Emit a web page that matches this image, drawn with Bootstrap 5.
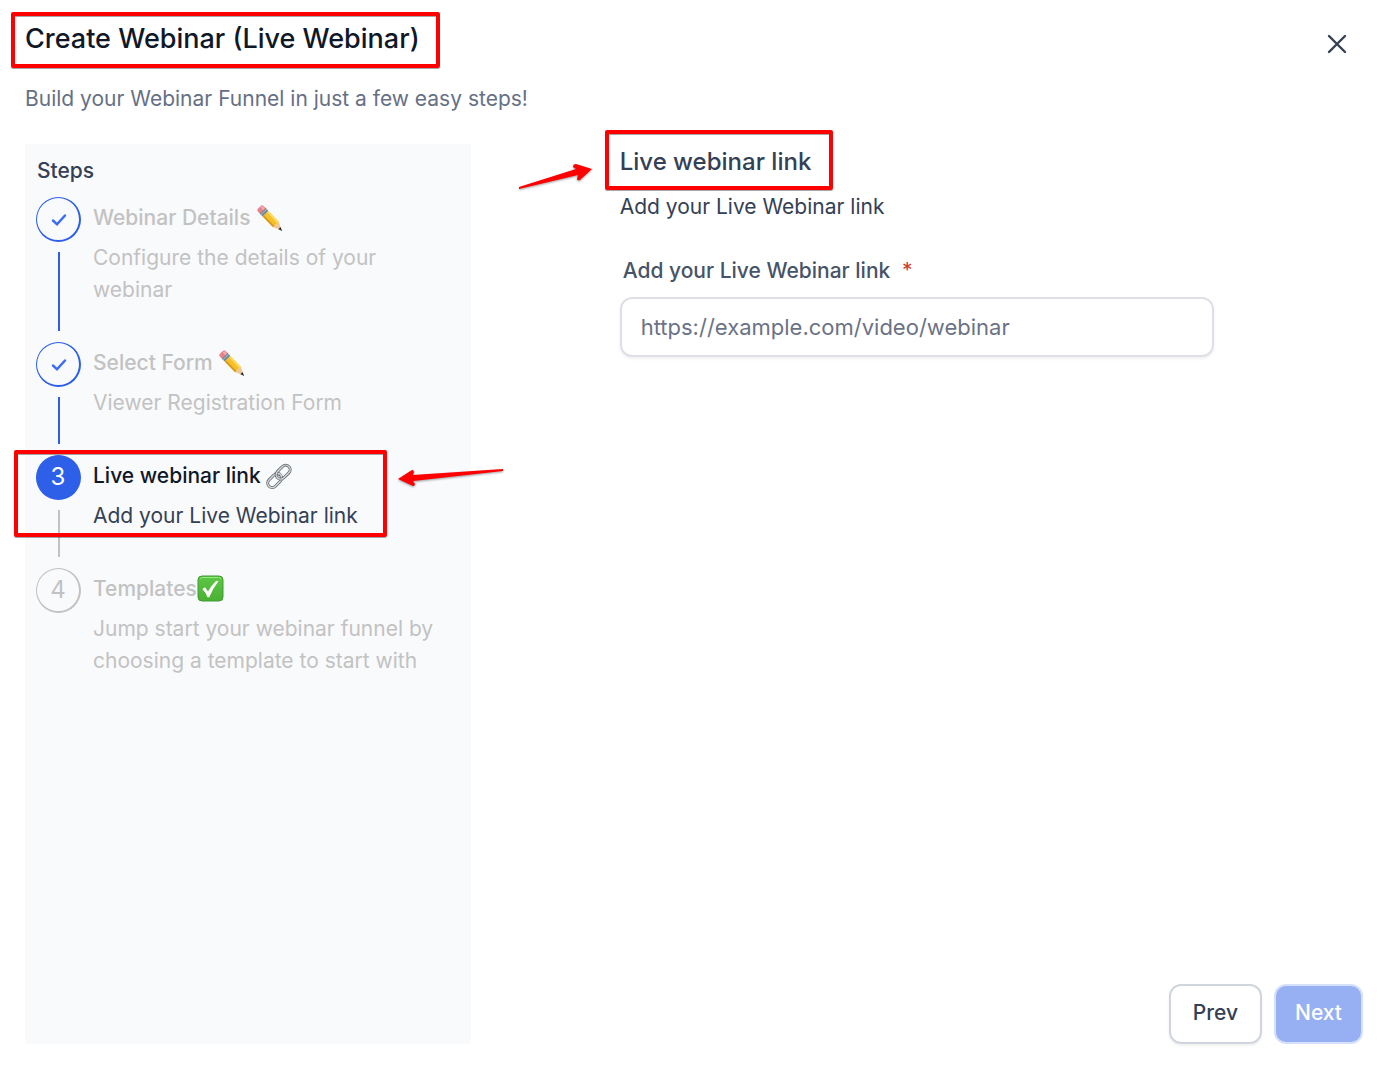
<!DOCTYPE html>
<html lang="en">
<head>
<meta charset="utf-8">
<meta name="viewport" content="width=device-width, initial-scale=1">
<title>Create Webinar</title>
<link href="https://cdn.jsdelivr.net/npm/bootstrap@5.3.0/dist/css/bootstrap.min.css" rel="stylesheet">
<style>
  :root { --ink: #101828; --slate: #344054; --muted: #667085; --off: #c2c2c2; --brand: #2e5fe8; --gap-step: 36px; }
  body { font-family: Inter, "Liberation Sans", sans-serif; font-size: 21px; line-height: 32px; color: var(--slate); background: #fff; }
  .page-shell { padding: 20px 25px 42px; }
  .page-title { font-size: 27px; line-height: 38px; font-weight: 500; color: var(--ink); }
  .page-sub { color: var(--muted); margin: 25px 0 29px; }
  .close-btn { width: 52px; height: 48px; color: var(--slate); }
  .steps-panel { background: #f9fafc; padding: 11px 12px 12px 11px; }
  .steps-title { font-size: 21px; line-height: 32px; font-weight: 500; padding-left: 1px; margin-bottom: 10px; }
  .step-item { gap: 12px; color: var(--off); }
  .step-rail { flex: 0 0 45px; }
  .step-dot { width: 45px; height: 45px; border: solid var(--off); border-width: 1px 2px 2px 1px; font-size: 24px; }
  .step-dot svg { margin: 2px 0 0 2px; }
  .step-line { width: 2px; background: var(--off); margin: 10px 0 11px; }
  .step-body { padding-top: 5px; }
  .step-item:not(:last-child) .step-body { padding-bottom: var(--gap-step); }
  .step-name { font-size: 21px; line-height: 32px; font-weight: 500; margin-bottom: 8px; }
  .step-done .step-dot { border-color: var(--brand); color: #3b6cf6; }
  .step-done .step-line { background: var(--brand); }
  .step-now { color: var(--slate); }
  .step-now .step-dot { border-color: var(--brand); background: var(--brand); color: #fff; }
  .step-now .step-name { color: var(--ink); }
  .emoji-art { width: 28px; height: 28px; }
  .form-title { font-size: 24px; line-height: 36px; font-weight: 500; margin-bottom: 11px; }
  .field-label { font-weight: 500; color: #475467; padding-left: 3px; margin: 32px 0 10px; }
  .field-star { color: #d03a2b; margin-left: 6px; font-weight: 400; }
  .field-input { height: 60px; font-size: 22px; border: 2px solid #dfe0e7; border-radius: 12px; padding: 0 19px 1px; box-shadow: 0 2px 3px rgba(16,24,40,.06); }
  .field-input::placeholder { color: #6b7285; }
  .foot-bar { gap: 12px; }
  .foot-btn { height: 60px; font-size: 21px; font-weight: 500; border-width: 2px; border-radius: 12px; padding: 0 22px 2px; }
  .foot-prev { border-color: #d0d5dd; color: var(--slate); box-shadow: 0 2px 3px rgba(16,24,40,.06); }
  .foot-next, .foot-next:disabled { background: #97aff3; border-color: #d5e0fc; color: #fff; opacity: 1; padding: 0 19px 2px; }
  .art-defs { position: absolute; width: 0; height: 0; }
  /* red call-outs laid over the page */
  .callout-box { position: absolute; border: 4px solid #f00; border-radius: 2px; box-shadow: 0 1px 0 rgba(0,0,0,.35), inset 0 1px 0 rgba(0,0,0,.35); pointer-events: none; }
  .callout-arrow { position: absolute; overflow: visible; filter: drop-shadow(0 1px 1px rgba(0,0,0,.4)); pointer-events: none; }
  .on-title { inset: -8px -20px -10px -14px; }
  .on-step { left: -22px; top: -5px; width: 373px; height: 87px; }
  .on-form { inset: -14px -22px -10px -15px; }
  .to-step { left: 362px; top: 12px; }
  .to-form { left: -102px; top: 18px; }
</style>
</head>
<body>
<svg class="art-defs" xmlns="http://www.w3.org/2000/svg" aria-hidden="true">
  <defs>
    <linearGradient id="gGreen" x1="0" y1="0" x2="0" y2="1"><stop offset="0" stop-color="#5cc843"/><stop offset="1" stop-color="#4bb034"/></linearGradient>
  </defs>
  <symbol id="pencil" viewBox="0 0 28 28">
    <g transform="translate(4 4) rotate(46)">
      <path d="M1-4h4v8H1a2 2 0 0 1-2-2v-4a2 2 0 0 1 2-2z" fill="#e8838b"/>
      <path d="M0-3h4v2H0z" fill="#f6aeb2"/>
      <path d="M4-4h4v8H4z" fill="#6f8492"/><path d="M5-4h1v8H5z" fill="#a9bac4"/>
      <path d="M8-4h15v8H8z" fill="#f6c02c"/><path d="M8-4h15v2H8z" fill="#fddc62"/><path d="M8 2h15v2H8z" fill="#d99a17"/>
      <path d="M23-4l8 4-8 4z" fill="#edc894"/><path d="M28-1.500l4 1.500-4 1.500z" fill="#33302e"/>
    </g>
  </symbol>
  <symbol id="chain" viewBox="0 0 28 28">
    <g fill="none" transform="rotate(-45 14 14)">
      <rect x="-1" y="9" width="16" height="9" rx="4.500" stroke="#62686d" stroke-width="3"/>
      <rect x="-1" y="9" width="16" height="9" rx="4.500" stroke="#d8dcdf" stroke-width="1.400"/>
      <rect x="11" y="9" width="16" height="9" rx="4.500" stroke="#62686d" stroke-width="3"/>
      <rect x="11" y="9" width="16" height="9" rx="4.500" stroke="#d8dcdf" stroke-width="1.400"/>
      <path d="M14 10.500a4.500 4.500 0 0 1 1 4" stroke="#62686d" stroke-width="3"/><path d="M14 10.500a4.500 4.500 0 0 1 1 5" stroke="#d8dcdf" stroke-width="1.400"/>
    </g>
  </symbol>
  <symbol id="greencheck" viewBox="0 0 28 28">
    <rect x="1" y="1" width="25" height="25" rx="4" fill="url(#gGreen)" stroke="#3f9b31"/>
    <path d="M3 4Q3.500 2.500 5.500 2.500h16q2 0 2.500 1.500" fill="none" stroke="#9be887" stroke-width="1"/>
    <path d="M5.300 14l2.700-1.700 3 4.300Q14.500 10 19.300 5.700l2.200.5Q16 13 12.300 22.200h-1.800Q8.500 17 5.300 14z" fill="#fff"/>
  </symbol>
  <symbol id="tick" viewBox="0 0 16 14">
    <path d="M2 7.500L6 11.300L14 2.500" fill="none" stroke="currentColor" stroke-width="2.500" stroke-linecap="round" stroke-linejoin="miter"/>
  </symbol>
</svg>

<div class="page-shell d-flex flex-column min-vh-100">
  <header class="d-flex justify-content-between align-items-start">
    <div>
      <h1 class="page-title position-relative d-inline-block mb-0">Create Webinar (Live Webinar)<span class="callout-box on-title"></span></h1>
      <p class="page-sub">Build your Webinar Funnel in just a few easy steps!</p>
    </div>
    <button type="button" class="close-btn btn border-0 p-0 d-flex align-items-center justify-content-center" aria-label="Close">
      <svg width="20" height="20" viewBox="0 0 20 20" fill="none" stroke="currentColor" stroke-width="2.400" stroke-linecap="round"><path d="M2 2l16 16M18 2L2 18"/></svg>
    </button>
  </header>

  <main class="row gx-0 flex-grow-1">
    <aside class="col-4 steps-panel">
      <h2 class="steps-title">Steps</h2>
      <ol class="list-unstyled mb-0">
        <li class="step-item step-done d-flex">
          <div class="step-rail d-flex flex-column align-items-center">
            <span class="step-dot rounded-circle d-flex align-items-center justify-content-center"><svg width="16" height="14"><use href="#tick"/></svg></span>
            <span class="step-line flex-grow-1"></span>
          </div>
          <div class="step-body">
            <h3 class="step-name d-flex align-items-center">Webinar Details&nbsp;<svg class="emoji-art"><use href="#pencil"/></svg></h3>
            <p class="mb-0">Configure the details of your webinar</p>
          </div>
        </li>
        <li class="step-item step-done d-flex">
          <div class="step-rail d-flex flex-column align-items-center">
            <span class="step-dot rounded-circle d-flex align-items-center justify-content-center"><svg width="16" height="14"><use href="#tick"/></svg></span>
            <span class="step-line flex-grow-1"></span>
          </div>
          <div class="step-body">
            <h3 class="step-name d-flex align-items-center">Select Form&nbsp;<svg class="emoji-art"><use href="#pencil"/></svg></h3>
            <p class="mb-0">Viewer Registration Form</p>
          </div>
        </li>
        <li class="step-item step-now d-flex position-relative" aria-current="step">
          <div class="step-rail d-flex flex-column align-items-center">
            <span class="step-dot rounded-circle d-flex align-items-center justify-content-center">3</span>
            <span class="step-line flex-grow-1"></span>
          </div>
          <div class="step-body">
            <h3 class="step-name d-flex align-items-center">Live webinar link&nbsp;<svg class="emoji-art"><use href="#chain"/></svg></h3>
            <p class="mb-0">Add your Live Webinar link</p>
          </div>
          <span class="callout-box on-step"></span>
          <svg class="callout-arrow to-step" width="106" height="22" viewBox="0 0 106 22"><path d="M0 12L14 3q2 0 2 2l-1 3L105 2v2L15 14l2 3q0 2-2 2z" fill="#f00"/></svg>
        </li>
        <li class="step-item d-flex">
          <div class="step-rail d-flex flex-column align-items-center">
            <span class="step-dot rounded-circle d-flex align-items-center justify-content-center">4</span>
          </div>
          <div class="step-body">
            <h3 class="step-name d-flex align-items-center">Templates<svg class="emoji-art"><use href="#greencheck"/></svg></h3>
            <p class="mb-0">Jump start your webinar funnel by choosing a template to start with</p>
          </div>
        </li>
      </ol>
    </aside>

    <form class="col-8 d-flex flex-column">
      <div class="row gx-0 justify-content-center">
        <div class="col-8">
          <h2 class="form-title position-relative d-inline-block">Live webinar link<span class="callout-box on-form"></span>
            <svg class="callout-arrow to-form" width="74" height="28" viewBox="0 0 74 28"><path d="M1 25L58 7l-3-2q0-3 3-3L74 7 62 18q-3 1-3-1l1-4L1 27z" fill="#f00"/></svg></h2>
          <p class="mb-0">Add your Live Webinar link</p>
          <label class="field-label d-block" for="webinarLink">Add your Live Webinar link <span class="field-star">*</span></label>
          <input type="url" id="webinarLink" class="form-control field-input" placeholder="https://example.com/video/webinar" required>
        </div>
      </div>
      <div class="foot-bar d-flex justify-content-end mt-auto">
        <button type="button" class="btn foot-btn foot-prev">Prev</button>
        <button type="submit" class="btn foot-btn foot-next" disabled>Next</button>
      </div>
    </form>
  </main>
</div>
<script src="https://cdn.jsdelivr.net/npm/bootstrap@5.3.0/dist/js/bootstrap.bundle.min.js"></script>
</body>
</html>
